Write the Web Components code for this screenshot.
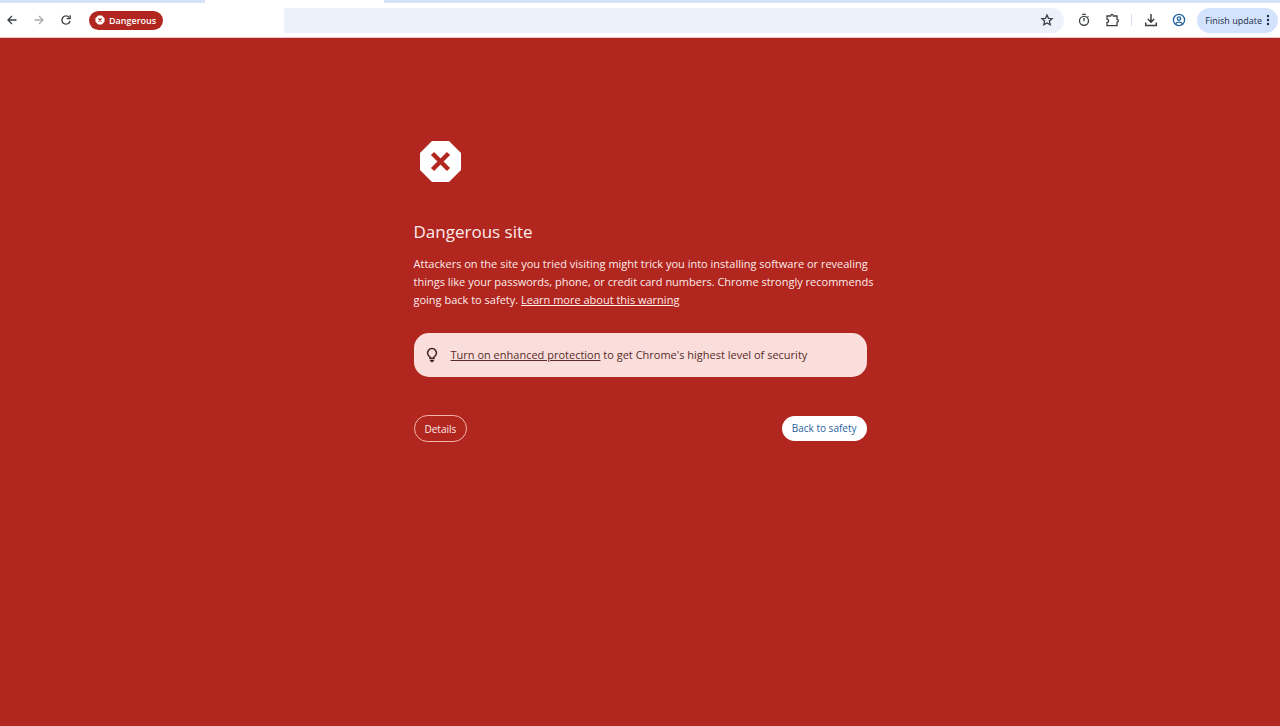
<!DOCTYPE html>
<html lang="en">
<head>
<meta charset="utf-8">
<title>Dangerous site</title>
<style>
  body {
    margin: 0;
    min-height: 100vh;
    background: #b1261e;
    font-family: "Open Sans", "Segoe UI", sans-serif;
  }
</style>
</head>
<body>

<browser-bar>
  <danger-chip slot="chip">Dangerous</danger-chip>
</browser-bar>

<warning-page>
  <span slot="title">Dangerous site</span>
  Attackers on the site you tried visiting might trick you into installing software or revealing things like your passwords, phone, or credit card numbers. Chrome strongly recommends going back to safety. <a href="#learn">Learn more about this warning</a>
  <tip-box slot="tip"><a href="#enhanced">Turn on enhanced protection</a> to get Chrome's highest level of security</tip-box>
  <pill-button slot="actions" kind="outline">Details</pill-button>
  <pill-button slot="actions">Back to safety</pill-button>
</warning-page>

<script>
/* Toolbar */
const barTemplate = document.createElement('template');
barTemplate.innerHTML = `
  <style>
    :host {
      display: block;
      background: #fff;
      border-bottom: 1px solid #e3c9c7;
    }

    .tabs {
      display: flex;
      height: 3px;
      background: #d5e3f9;
    }

    .tab {
      width: 14%;
      margin-left: 16%;
      background: #fff;
    }

    .toolbar {
      display: flex;
      align-items: center;
      height: 34px;
    }

    .nav, .tools {
      display: flex;
      align-items: center;
      gap: 3px;
    }

    .tools {
      gap: 4px;
    }

    button {
      display: flex;
      align-items: center;
      justify-content: center;
      width: 24px;
      height: 24px;
      padding: 0;
      border: 0;
      background: none;
      color: #3c4043;
      font-family: inherit;
      cursor: pointer;
    }

    button:disabled {
      color: #a9abae;
    }

    svg {
      display: block;
      fill: none;
      stroke: currentColor;
      stroke-width: 1.3;
    }

    .omnibox {
      flex: 1;
      display: flex;
      align-items: center;
      height: 25px;
      margin: 0 8px;
      padding-right: 5px;
      background: #edf1fa;
      border-radius: 13px;
    }

    .address {
      display: flex;
      align-items: center;
      height: 25px;
      padding-left: 3px;
      background: #fff;
    }

    input {
      width: 121px;
      height: 24px;
      box-sizing: border-box;
      padding: 0 8px;
      border: 0;
      outline: 0;
      background: none;
      font: 12px "Open Sans", sans-serif;
    }

    .star {
      margin-left: auto;
    }

    .divider {
      width: 1px;
      height: 12px;
      margin: 0 3px;
      background: #d3dcec;
    }

    .profile {
      color: #1f5f9f;
    }

    .update {
      width: auto;
      height: 25px;
      margin: 0 2px;
      padding: 0 8px;
      gap: 4px;
      border-radius: 13px;
      background: #d3e3fd;
      color: #1c2b45;
      font-size: 9px;
    }
  </style>

  <div class="tabs"><div class="tab"></div></div>
  <div class="toolbar">
    <div class="nav">
      <button aria-label="Back">
        <svg width="12" height="12" viewBox="0 0 12 12"><path d="M10.500 6H2M6 2 2 6l4 4"/></svg>
      </button>
      <button aria-label="Forward" disabled>
        <svg width="12" height="12" viewBox="0 0 12 12"><path d="M1.500 6H10M6 2l4 4-4 4"/></svg>
      </button>
      <button aria-label="Reload">
        <svg width="12" height="12" viewBox="0 0 12 12"><path d="M10 7A4.100 4.100 0 1 1 9.200 3.500"/><path d="M10.200 1.200v3.500H6.700"/></svg>
      </button>
    </div>
    <div class="omnibox">
      <div class="address">
        <slot name="chip"></slot>
        <input type="text" aria-label="Address">
      </div>
      <button class="star" aria-label="Bookmark this page">
        <svg width="14" height="14" viewBox="0 0 14 14"><path d="M7 2l1.500 3.300 3.600.4-2.700 2.400.8 3.600L7 9.900l-3.200 1.800.8-3.600L1.900 5.700l3.600-.4z"/></svg>
      </button>
    </div>
    <div class="tools">
      <button aria-label="Timer">
        <svg width="14" height="14" viewBox="0 0 14 14"><path d="M5.200 1.300h3.600M7 5v3.200M10.600 3.900l.8-.8"/><circle cx="7" cy="7.800" r="4.500"/></svg>
      </button>
      <button aria-label="Extensions">
        <svg width="15" height="15" viewBox="0 0 15 15"><path d="M2 3h3.600c0-2 2.800-2 2.800 0H12v3.400c1.900 0 1.900 2.700 0 2.700v3.500H2V9.500c2.200 0 2.200-3.300 0-3.300z"/></svg>
      </button>
      <span class="divider"></span>
      <button aria-label="Downloads">
        <svg width="14" height="14" viewBox="0 0 14 14"><path stroke-width="1.500" d="M7 1v8M3.800 6 7 9.200 10.200 6M1.700 9.500v3h10.600v-3"/></svg>
      </button>
      <button class="profile" aria-label="Profile">
        <svg width="14" height="14" viewBox="0 0 14 14"><circle cx="7" cy="7" r="5.600"/><circle cx="7" cy="5.600" r="1.700"/><path d="M3.500 10.800c1.500-2.200 5.500-2.200 7 0"/></svg>
      </button>
      <button class="update">
        Finish update
        <svg width="4" height="12" viewBox="0 0 4 12"><g fill="currentColor" stroke="none"><circle cx="2" cy="2" r="1.200"/><circle cx="2" cy="6" r="1.200"/><circle cx="2" cy="10" r="1.200"/></g></svg>
      </button>
    </div>
  </div>
`;

class BrowserBar extends HTMLElement {
  constructor() {
    super();
    this.attachShadow({ mode: 'open' });
    this.shadowRoot.appendChild(barTemplate.content.cloneNode(true));
  }
}

/* Red chip in the address bar */
const chipTemplate = document.createElement('template');
chipTemplate.innerHTML = `
  <style>
    :host {
      display: block;
    }

    button {
      display: flex;
      align-items: center;
      gap: 4px;
      height: 19px;
      padding: 0 7px 0 6px;
      border: 0;
      border-radius: 10px;
      background: #b1261e;
      color: #fff;
      font-family: inherit;
      font-size: 9px;
      font-weight: 600;
      cursor: pointer;
    }
  </style>

  <button>
    <svg width="10" height="10" viewBox="0 0 10 10"><path fill="#fff" d="M3.200.5h3.600l2.700 2.700v3.600L6.800 9.500H3.200L.5 6.800V3.200z"/><path stroke="#b1261e" stroke-width="1.300" d="M3.500 3.500l3 3m0-3-3 3"/></svg>
    <slot></slot>
  </button>
`;

class DangerChip extends HTMLElement {
  constructor() {
    super();
    this.attachShadow({ mode: 'open' });
    this.shadowRoot.appendChild(chipTemplate.content.cloneNode(true));
  }
}

/* Warning */
const warningTemplate = document.createElement('template');
warningTemplate.innerHTML = `
  <style>
    :host {
      display: block;
      max-width: 453px;
      margin: 0 auto;
      padding: 97px 16px 24px;
      color: #fdeceb;
    }

    .icon {
      display: block;
      width: 54px;
      height: 54px;
    }

    h1 {
      margin: 29px 0 9px;
      font-size: 17px;
      font-weight: 400;
      line-height: 28px;
    }

    /* lines may run a little past the tip box */
    p {
      margin: 0 -8px 0 0;
      font-size: 11px;
      line-height: 18px;
    }

    ::slotted(a) {
      color: inherit;
      text-underline-offset: 1px;
    }

    .actions {
      display: flex;
      align-items: flex-start;
      justify-content: space-between;
      margin-top: 38px;
    }
  </style>

  <svg class="icon" viewBox="0 0 54 54">
    <path fill="#fff" d="M18 6h17l12 12v17L35 47H18L6 35V18z"/>
    <path stroke="#b1261e" stroke-width="4.500" d="M18.500 18.500l16 16m0-16-16 16"/>
  </svg>
  <h1><slot name="title"></slot></h1>
  <p><slot></slot></p>
  <slot name="tip"></slot>
  <div class="actions"><slot name="actions"></slot></div>
`;

class WarningPage extends HTMLElement {
  constructor() {
    super();
    this.attachShadow({ mode: 'open' });
    this.shadowRoot.appendChild(warningTemplate.content.cloneNode(true));
  }
}

/* Pink box with the bulb */
const tipTemplate = document.createElement('template');
tipTemplate.innerHTML = `
  <style>
    :host {
      display: flex;
      align-items: center;
      gap: 12px;
      margin-top: 24px;
      padding: 13px 11px;
      border-radius: 15px;
      background: #f9dedb;
      color: #5a2b29;
      font-size: 11px;
      line-height: 18px;
    }

    svg {
      flex: none;
    }

    ::slotted(a) {
      color: inherit;
      text-underline-offset: 1px;
    }
  </style>

  <svg width="14" height="16" viewBox="0 0 14 16"><path fill="none" stroke="#46211f" stroke-width="1.500" d="M5 11.200V9.900a4.400 4.400 0 1 1 4 0v1.300z"/><path fill="#46211f" d="M4.700 12.700h4.600v1H4.700zM5.500 13.700h3a1.500 1.500 0 0 1-3 0z"/></svg>
  <div><slot></slot></div>
`;

class TipBox extends HTMLElement {
  constructor() {
    super();
    this.attachShadow({ mode: 'open' });
    this.shadowRoot.appendChild(tipTemplate.content.cloneNode(true));
  }
}

/* Round buttons */
const pillTemplate = document.createElement('template');
pillTemplate.innerHTML = `
  <style>
    :host {
      display: block;
    }

    button {
      height: 25px;
      padding: 0 10px;
      border: 0;
      border-radius: 14px;
      background: #fff;
      color: #2b62a0;
      font-family: inherit;
      font-size: 10px;
      cursor: pointer;
    }

    :host([kind="outline"]) button {
      height: 27px;
      border: 1px solid #f3b5b0;
      background: none;
      color: #fdeceb;
    }
  </style>

  <button><slot></slot></button>
`;

class PillButton extends HTMLElement {
  constructor() {
    super();
    this.attachShadow({ mode: 'open' });
    this.shadowRoot.appendChild(pillTemplate.content.cloneNode(true));
  }
}

window.customElements.define('browser-bar', BrowserBar);
window.customElements.define('danger-chip', DangerChip);
window.customElements.define('warning-page', WarningPage);
window.customElements.define('tip-box', TipBox);
window.customElements.define('pill-button', PillButton);
</script>
</body>
</html>
